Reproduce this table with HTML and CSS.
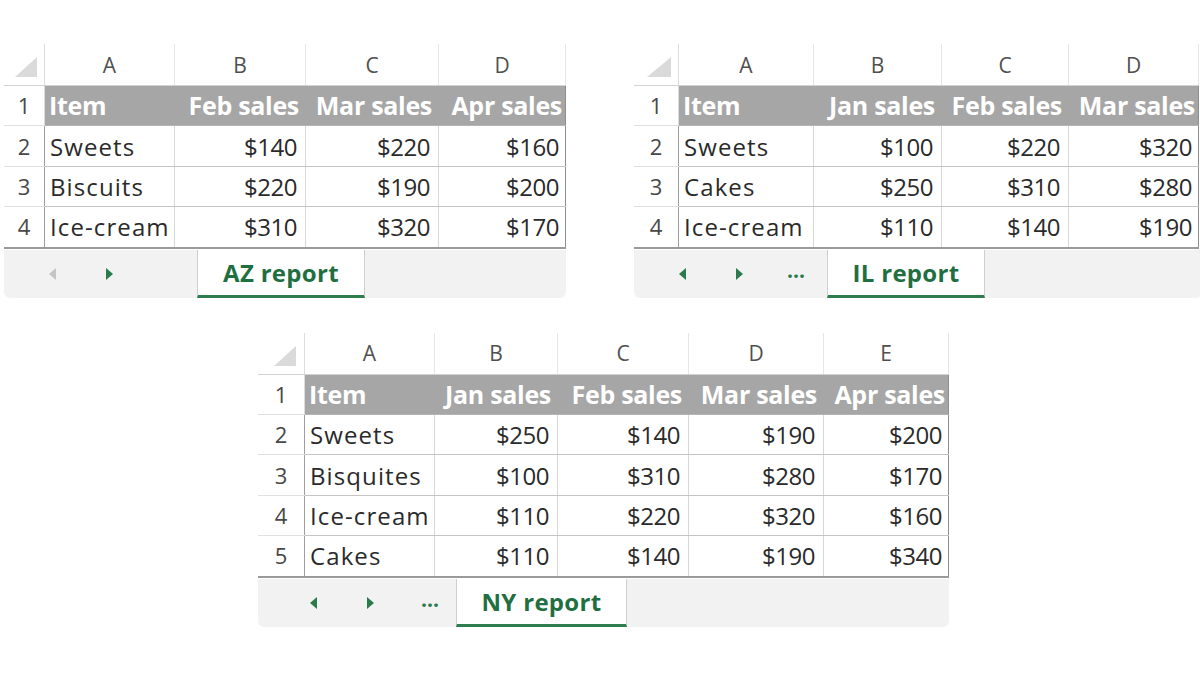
FILE: index.html
```html
<!DOCTYPE html>
<html>
<head>
<meta charset="utf-8">
<link rel="stylesheet" href="styles.css">
</head>
<body>
<div class="page">
  <div class="row top">
    <div class="sheet s1">
      <table class="grid">
        <colgroup><col class="rh"><col class="ca"><col class="cb"><col class="cc"><col class="cd"></colgroup>
        <tr class="letters"><th class="corner"><svg width="40" height="40" viewBox="0 0 40 40"><polygon points="33,13 33,33 11,33" fill="#dadada"/></svg></th><th>A</th><th>B</th><th>C</th><th>D</th></tr>
        <tr class="head"><th class="rn">1</th><td class="txt">Item</td><td class="num">Feb sales</td><td class="num">Mar sales</td><td class="num last">Apr sales</td></tr>
        <tr><th class="rn">2</th><td class="txt">Sweets</td><td class="num">$140</td><td class="num">$220</td><td class="num last">$160</td></tr>
        <tr><th class="rn">3</th><td class="txt">Biscuits</td><td class="num">$220</td><td class="num">$190</td><td class="num last">$200</td></tr>
        <tr class="end"><th class="rn">4</th><td class="txt">Ice-cream</td><td class="num">$310</td><td class="num">$320</td><td class="num last">$170</td></tr>
      </table>
      <div class="tabbar">
        <div class="nav">
          <span class="arrow left off"></span>
          <span class="arrow right"></span>
        </div>
        <div class="tab t1">AZ report</div>
      </div>
    </div>
    <div class="sheet s2">
      <table class="grid">
        <colgroup><col class="rh"><col class="ca"><col class="cb"><col class="cc"><col class="cd"></colgroup>
        <tr class="letters"><th class="corner"><svg width="44" height="40" viewBox="0 0 44 40"><polygon points="37,13 37,33 13,33" fill="#dadada"/></svg></th><th>A</th><th>B</th><th>C</th><th>D</th></tr>
        <tr class="head"><th class="rn">1</th><td class="txt">Item</td><td class="num">Jan sales</td><td class="num">Feb sales</td><td class="num last">Mar sales</td></tr>
        <tr><th class="rn">2</th><td class="txt">Sweets</td><td class="num">$100</td><td class="num">$220</td><td class="num last">$320</td></tr>
        <tr><th class="rn">3</th><td class="txt">Cakes</td><td class="num">$250</td><td class="num">$310</td><td class="num last">$280</td></tr>
        <tr class="end"><th class="rn">4</th><td class="txt">Ice-cream</td><td class="num">$110</td><td class="num">$140</td><td class="num last">$190</td></tr>
      </table>
      <div class="tabbar">
        <div class="nav">
          <span class="arrow left"></span>
          <span class="arrow right"></span>
          <span class="dots">...</span>
        </div>
        <div class="tab t2">IL report</div>
      </div>
    </div>
  </div>
  <div class="row bottom">
    <div class="sheet s3">
      <table class="grid">
        <colgroup><col class="rh"><col class="ca"><col class="cb"><col class="cc"><col class="cd"><col class="ce"></colgroup>
        <tr class="letters"><th class="corner"><svg width="46" height="40" viewBox="0 0 46 40"><polygon points="38,13 38,33 16,33" fill="#dadada"/></svg></th><th>A</th><th>B</th><th>C</th><th>D</th><th>E</th></tr>
        <tr class="head"><th class="rn">1</th><td class="txt">Item</td><td class="num">Jan sales</td><td class="num">Feb sales</td><td class="num">Mar sales</td><td class="num last">Apr sales</td></tr>
        <tr><th class="rn">2</th><td class="txt">Sweets</td><td class="num">$250</td><td class="num">$140</td><td class="num">$190</td><td class="num last">$200</td></tr>
        <tr><th class="rn">3</th><td class="txt">Bisquites</td><td class="num">$100</td><td class="num">$310</td><td class="num">$280</td><td class="num last">$170</td></tr>
        <tr><th class="rn">4</th><td class="txt">Ice-cream</td><td class="num">$110</td><td class="num">$220</td><td class="num">$320</td><td class="num last">$160</td></tr>
        <tr class="end"><th class="rn">5</th><td class="txt">Cakes</td><td class="num">$110</td><td class="num">$140</td><td class="num">$190</td><td class="num last">$340</td></tr>
      </table>
      <div class="tabbar">
        <div class="nav">
          <span class="arrow left"></span>
          <span class="arrow right"></span>
          <span class="dots">...</span>
        </div>
        <div class="tab t3">NY report</div>
      </div>
    </div>
  </div>
</div>
</body>
</html>
```

FILE: styles.css
```css
html, body {
  margin: 0;
  padding: 0;
  background: #ffffff;
}
body {
  font-family: "Open Sans", "Liberation Sans", sans-serif;
  color: #2a2a2a;
}
.page {
  width: 1200px;
  height: 675px;
  overflow: hidden;
  box-sizing: border-box;
  padding-top: 44px;
}
.row {
  display: flex;
}
.top {
  padding-left: 4px;
  gap: 68px;
}
.bottom {
  padding-left: 258px;
  margin-top: 35px;
}
.sheet {
  display: flex;
  flex-direction: column;
}

/* grid */
.grid {
  border-collapse: collapse;
  table-layout: fixed;
}
.grid th, .grid td {
  padding: 0;
  height: 39.4px;
  font-size: 24px;
  line-height: 39px;
  white-space: nowrap;
  overflow: hidden;
}
.s1 .rh { width: 40px; }
.s1 .ca { width: 130px; }
.s1 .cb { width: 131px; }
.s1 .cc { width: 133px; }
.s1 .cd { width: 127px; }
.s2 .rh { width: 44px; }
.s2 .ca { width: 135px; }
.s2 .cb { width: 128px; }
.s2 .cc { width: 127px; }
.s2 .cd { width: 130px; }
.s3 .rh { width: 46px; }
.s3 .ca { width: 130px; }
.s3 .cb { width: 123px; }
.s3 .cc { width: 131px; }
.s3 .cd { width: 135px; }
.s3 .ce { width: 125px; }

.letters th {
  height: 41px;
  line-height: 40px;
  font-weight: 400;
  color: #505050;
  font-size: 21px;
  text-align: center;
  border-right: 1px solid #e6e6e6;
  border-bottom: 1px solid #d2d2d2;
}
.letters th.corner {
  padding: 0;
  line-height: 0;
  vertical-align: top;
  border-right: 1px solid #dcdcdc;
}
.corner svg {
  display: block;
}
.rn {
  font-weight: 400;
  color: #484848;
  text-align: center;
  font-size: 22px !important;
  border-bottom: 1px solid #e0e0e0;
  border-right: 1px solid #9e9e9e;
}
.txt {
  text-align: left;
  padding-left: 5px !important;
  letter-spacing: 1.1px;
}
.num {
  text-align: right;
  padding-right: 8px !important;
  letter-spacing: -0.5px;
}
.grid td {
  border-bottom: 1px solid #c4c4c4;
  border-right: 1px solid #d8d8d8;
}
.grid td.last {
  border-right: 1px solid #8e8e8e;
}
.grid td.num.last {
  padding-right: 6px !important;
}
.head td {
  background: #a6a6a6;
  color: #ffffff;
  font-weight: 700;
  font-size: 25px !important;
  letter-spacing: -0.3px;
  border-right: 1px solid #a6a6a6;
  border-bottom: 1px solid #b4b4b4;
}
.head td.txt {
  padding-left: 4px !important;
}
.head td.num {
  padding-right: 6px !important;
}
.head td.num.last {
  padding-right: 3px !important;
}
.head td.last {
  border-right: 1px solid #8e8e8e;
}
.head .rn {
  border-right: 1px solid #dcdcdc;
}
.end td, .end th {
  border-bottom: 2px solid #9a9a9a;
}

/* tab bar */
.tabbar {
  margin-top: 1px;
  height: 48px;
  background: #f2f2f2;
  border-radius: 0 0 6px 6px;
  display: flex;
  align-items: stretch;
}
.nav {
  width: 193px;
  display: flex;
  align-items: center;
  flex: none;
}
.arrow {
  width: 0;
  height: 0;
  border-top: 6px solid transparent;
  border-bottom: 6px solid transparent;
}
.arrow.left {
  border-right: 7px solid #2b7a4b;
  margin-left: 45px;
}
.arrow.left.off {
  border-right-color: #c4c4c4;
}
.arrow.right {
  border-left: 7px solid #2b7a4b;
  margin-left: 50px;
}
.dots {
  margin-left: 44px;
  color: #2b7a4b;
  font-weight: 700;
  font-size: 21px;
  line-height: 1;
  padding-bottom: 6px;
}
.s3 .arrow.left { margin-left: 52px; }
.s3 .dots { margin-left: 47px; }
.s3 .nav { width: 198px; }
.tab {
  background: #ffffff;
  border-left: 1px solid #cfcfcf;
  border-right: 1px solid #cfcfcf;
  border-bottom: 3px solid #2e7d4f;
  box-sizing: border-box;
  height: 48px;
  display: flex;
  align-items: center;
  justify-content: center;
  color: #1f6f40;
  font-weight: 700;
  font-size: 24px;
  letter-spacing: 0.3px;
  padding-top: 1px;
}
.t1 { width: 168px; }
.t2 { width: 158px; }
.t3 { width: 171px; }
.s2 .tabbar { margin-right: -3px; }
```
